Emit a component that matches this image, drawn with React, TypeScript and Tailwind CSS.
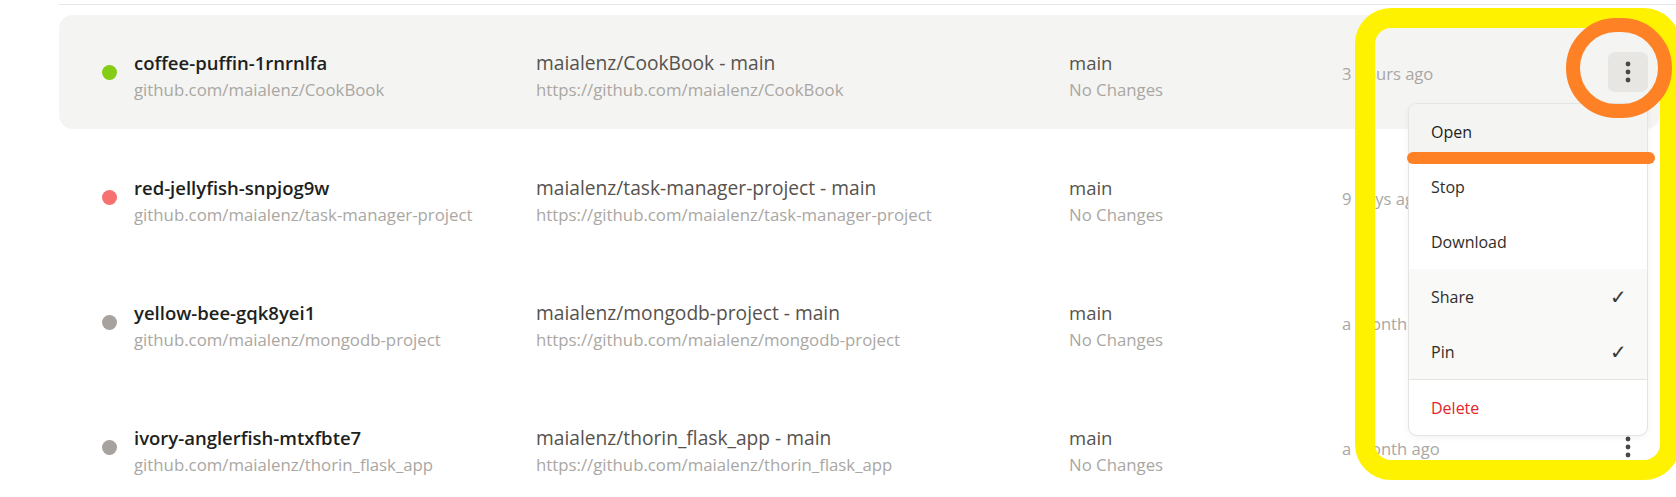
import React from 'react';

interface Workspace {
  id: string;
  name: string;
  repo: string;
  context: string;
  url: string;
  branch: string;
  changes: string;
  updated: string;
  dot: string;
  active?: boolean;
}

const workspaces: Workspace[] = [
  {
    id: 'coffee-puffin',
    name: 'coffee-puffin-1rnrnlfa',
    repo: 'github.com/maialenz/CookBook',
    context: 'maialenz/CookBook - main',
    url: 'https://github.com/maialenz/CookBook',
    branch: 'main',
    changes: 'No Changes',
    updated: '3 hours ago',
    dot: 'bg-[#84cc16]',
    active: true,
  },
  {
    id: 'red-jellyfish',
    name: 'red-jellyfish-snpjog9w',
    repo: 'github.com/maialenz/task-manager-project',
    context: 'maialenz/task-manager-project - main',
    url: 'https://github.com/maialenz/task-manager-project',
    branch: 'main',
    changes: 'No Changes',
    updated: '9 days ago',
    dot: 'bg-[#f87171]',
  },
  {
    id: 'yellow-bee',
    name: 'yellow-bee-gqk8yei1',
    repo: 'github.com/maialenz/mongodb-project',
    context: 'maialenz/mongodb-project - main',
    url: 'https://github.com/maialenz/mongodb-project',
    branch: 'main',
    changes: 'No Changes',
    updated: 'a month ago',
    dot: 'bg-[#a8a29e]',
  },
  {
    id: 'ivory-anglerfish',
    name: 'ivory-anglerfish-mtxfbte7',
    repo: 'github.com/maialenz/thorin_flask_app',
    context: 'maialenz/thorin_flask_app - main',
    url: 'https://github.com/maialenz/thorin_flask_app',
    branch: 'main',
    changes: 'No Changes',
    updated: 'a month ago',
    dot: 'bg-[#a8a29e]',
  },
];

const Kebab: React.FC = () => (
  <svg width="8" height="24" viewBox="0 0 8 24" fill="#4a4845">
    <circle cx="4" cy="4" r="2.4" />
    <circle cx="4" cy="12" r="2.4" />
    <circle cx="4" cy="20" r="2.4" />
  </svg>
);

const Row: React.FC<{ ws: Workspace }> = ({ ws }) => (
  <div
    className={`flex items-center h-[114px] rounded-[14px] pl-[43px] pr-[12px] ${
      ws.active ? 'bg-[#f4f4f2]' : ''
    }`}
  >
    <span className={`w-[15px] h-[15px] rounded-full shrink-0 mr-[17px] ${ws.dot}`} />
    <div className="w-[402px] shrink-0 pt-[8px] leading-[27px]">
      <div className="text-[18.5px] font-semibold text-[#201f1d]">{ws.name}</div>
      <div className="text-[16.8px] text-[#aaa7a3]">{ws.repo}</div>
    </div>
    <div className="w-[533px] shrink-0 pt-[8px] leading-[27px]">
      <div className="text-[19.2px] text-[#57524d]">{ws.context}</div>
      <div className="text-[16.8px] text-[#aaa7a3]">{ws.url}</div>
    </div>
    <div className="w-[273px] shrink-0 pt-[8px] leading-[27px]">
      <div className="text-[18.5px] text-[#57524d]">{ws.branch}</div>
      <div className="text-[16.8px] text-[#aaa7a3]">{ws.changes}</div>
    </div>
    <div className="flex-1 pt-[4px] text-[16.6px] text-[#aaa7a3]">{ws.updated}</div>
    <button
      className={`w-[40px] h-[40px] rounded-[7px] flex items-center justify-center ${
        ws.active ? 'bg-[#e7e6e3]' : ''
      }`}
    >
      <Kebab />
    </button>
  </div>
);

const MenuItem: React.FC<{ label: string; checked?: boolean; className?: string }> = ({
  label,
  checked,
  className = '',
}) => (
  <div className={`h-[55px] flex items-center justify-between pl-[22px] pr-[20px] text-[16px] ${className}`}>
    <span>{label}</span>
    {checked && <span className="text-[20px] font-light text-[#3a3836]">✓</span>}
  </div>
);

export default function App() {
  return (
    <div
      className="relative w-full h-[497px] overflow-hidden bg-white"
      style={{ fontFamily: '"Segoe UI", "Open Sans", "Noto Sans", sans-serif' }}
    >
      <div className="pl-[59px] pr-[16px]">
        <div className="mt-[4px] h-[1px] bg-[#e6e6e6] -mr-[16px]" />
        <div className="mt-[10px] flex flex-col gap-[11px]">
          {workspaces.map((ws) => (
            <Row key={ws.id} ws={ws} />
          ))}
        </div>
      </div>

      {/* open dropdown */}
      <div className="absolute left-[1408px] top-[103px] w-[240px] rounded-[9px] border border-[#e4e4e2] bg-white overflow-hidden shadow-[0_2px_6px_rgba(0,0,0,0.05)] text-[#2f2d2b]">
        <MenuItem label="Open" className="bg-[#f4f4f2] text-[#1f1d1b]" />
        <MenuItem label="Stop" />
        <MenuItem label="Download" />
        <div className="bg-[#f9f9f7] border-b border-[#e4e4e2]">
          <MenuItem label="Share" checked />
          <MenuItem label="Pin" checked />
        </div>
        <MenuItem label="Delete" className="text-[#e3242b]" />
      </div>

      {/* highlight annotations */}
      <div className="absolute left-[1355px] top-[8px] w-[325px] h-[472px] rounded-[36px] border-[20px] border-[#fff200]" />
      <div className="absolute left-[1566px] top-[18px] w-[106px] h-[100px] rounded-full border-[14px] border-[#fe8125]" />
      <div className="absolute left-[1407px] top-[152px] w-[248px] h-[12px] rounded-full bg-[#fe8125]" />
    </div>
  );
}
